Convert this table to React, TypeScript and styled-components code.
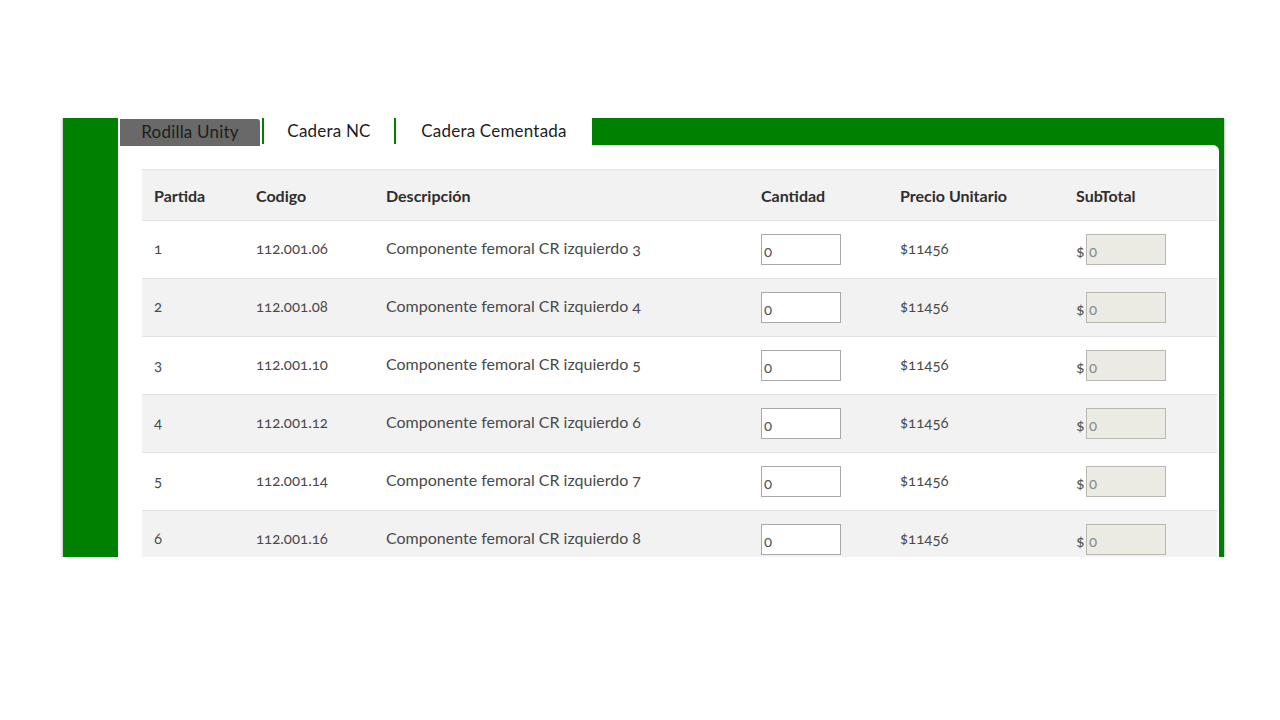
import React from "react";
import styled, { createGlobalStyle } from "styled-components";

const GlobalStyle = createGlobalStyle`
  html, body { margin: 0; padding: 0; background: #ffffff; }
  body { font-family: Lato, "Open Sans", Arial, sans-serif; }
  * { box-sizing: border-box; }
`;

const Page = styled.div`
  width: 1280px;
  height: 720px;
  padding-top: 118px;
  background: #ffffff;
`;

const Clip = styled.div`
  margin-left: 58px;
  width: 1172px;
  height: 439px;
  overflow: hidden;
  padding: 0 5px;
`;

const Frame = styled.div`
  background: #008000;
  width: 1161px;
  height: 600px;
  padding: 0 5px 0 55px;
  box-shadow: 0 0 3px rgba(0, 0, 0, 0.45);
  display: flex;
  flex-direction: column;
`;

const TabBar = styled.div`
  display: flex;
  height: 27px;
  flex: none;
`;

const TabStrip = styled.div`
  display: flex;
  background: #ffffff;
`;

const Tab = styled.div<{ $w: number; $active?: boolean; $divider?: boolean }>`
  width: ${(p) => p.$w}px;
  margin-left: ${(p) => (p.$divider ? 0 : 2)}px;
  margin-top: ${(p) => (p.$active ? 1 : 0)}px;
  height: ${(p) => (p.$active ? 27 : 26)}px;
  border-left: ${(p) => (p.$divider ? "2px solid #008000" : "none")};
  background: ${(p) => (p.$active ? "#696969" : "#ffffff")};
  border-top-right-radius: ${(p) => (p.$active ? 3 : 0)}px;
  display: flex;
  align-items: center;
  justify-content: center;
  padding-bottom: 2px;
  font-size: 17px;
  letter-spacing: 0.2px;
  color: #1d1d1d;
  position: relative;
  z-index: 1;
`;

const Spacer = styled.div<{ $w: number }>`
  width: ${(p) => p.$w}px;
`;

const TabFill = styled.div`
  flex: 1;
  background: #008000;
`;

const Body = styled.div`
  flex: 1;
  background: #ffffff;
  border-top-right-radius: 6px;
  padding: 24px 2px 0 24px;
`;

const Table = styled.div`
  display: flex;
  flex-direction: column;
  font-variant-numeric: oldstyle-nums;
`;

const Row = styled.div<{ $shade?: boolean; $head?: boolean }>`
  display: grid;
  grid-template-columns: 102px 130px 375px 139px 176px 1fr;
  align-items: center;
  height: ${(p) => (p.$head ? 51 : 58)}px;
  padding-bottom: ${(p) => (p.$head ? 0 : 4)}px;
  background: ${(p) => (p.$shade ? "#f2f2f2" : "#ffffff")};
  border-top: 1px solid ${(p) => (p.$head ? "#e4e4e4" : "#e2e2e2")};
`;

const Th = styled.div`
  padding-left: 12px;
  font-size: 16px;
  font-weight: 700;
  color: #2e2e2e;
`;

const Td = styled.div<{ $big?: boolean }>`
  padding-left: 12px;
  font-size: ${(p) => (p.$big ? 16 : 15)}px;
  color: #4a4a4a;
  display: flex;
  align-items: center;
`;

const QtyInput = styled.input`
  width: 80px;
  height: 31px;
  margin-top: 4px;
  border: 1px solid #a9a9a9;
  background: #ffffff;
  padding: 2px 2px 0;
  font-family: Lato, "Open Sans", Arial, sans-serif;
  font-size: 15px;
  color: #555;
  font-variant-numeric: oldstyle-nums;
  outline: none;
`;

const Dollar = styled.span`
  font-size: 16px;
  color: #555;
  margin-top: 6px;
  width: 10px;
`;

const SubInput = styled(QtyInput)`
  background: #ebebe4;
  border-color: #b8b8b0;
  color: #8a8a8a;
`;

const rows = [
  { n: "1", code: "112.001.06", d: "Componente femoral CR izquierdo 3" },
  { n: "2", code: "112.001.08", d: "Componente femoral CR izquierdo 4" },
  { n: "3", code: "112.001.10", d: "Componente femoral CR izquierdo 5" },
  { n: "4", code: "112.001.12", d: "Componente femoral CR izquierdo 6" },
  { n: "5", code: "112.001.14", d: "Componente femoral CR izquierdo 7" },
  { n: "6", code: "112.001.16", d: "Componente femoral CR izquierdo 8" },
];

export default function App() {
  return (
    <Page>
      <GlobalStyle />
      <Clip>
        <Frame>
          <TabBar>
            <TabStrip>
              <Tab $w={140} $active>
                Rodilla Unity
              </Tab>
              <Spacer $w={2} />
              <Tab $w={132} $divider>
                Cadera NC
              </Tab>
              <Tab $w={198} $divider>
                Cadera Cementada
              </Tab>
            </TabStrip>
            <TabFill />
          </TabBar>
          <Body>
            <Table>
              <Row $head $shade>
                <Th>Partida</Th>
                <Th>Codigo</Th>
                <Th>Descripción</Th>
                <Th>Cantidad</Th>
                <Th>Precio Unitario</Th>
                <Th>SubTotal</Th>
              </Row>
              {rows.map((r, i) => (
                <Row key={r.n} $shade={i % 2 === 1}>
                  <Td>{r.n}</Td>
                  <Td>{r.code}</Td>
                  <Td $big>{r.d}</Td>
                  <Td>
                    <QtyInput defaultValue="0" />
                  </Td>
                  <Td>$11456</Td>
                  <Td>
                    <Dollar>$</Dollar>
                    <SubInput defaultValue="0" disabled />
                  </Td>
                </Row>
              ))}
            </Table>
          </Body>
        </Frame>
      </Clip>
    </Page>
  );
}
